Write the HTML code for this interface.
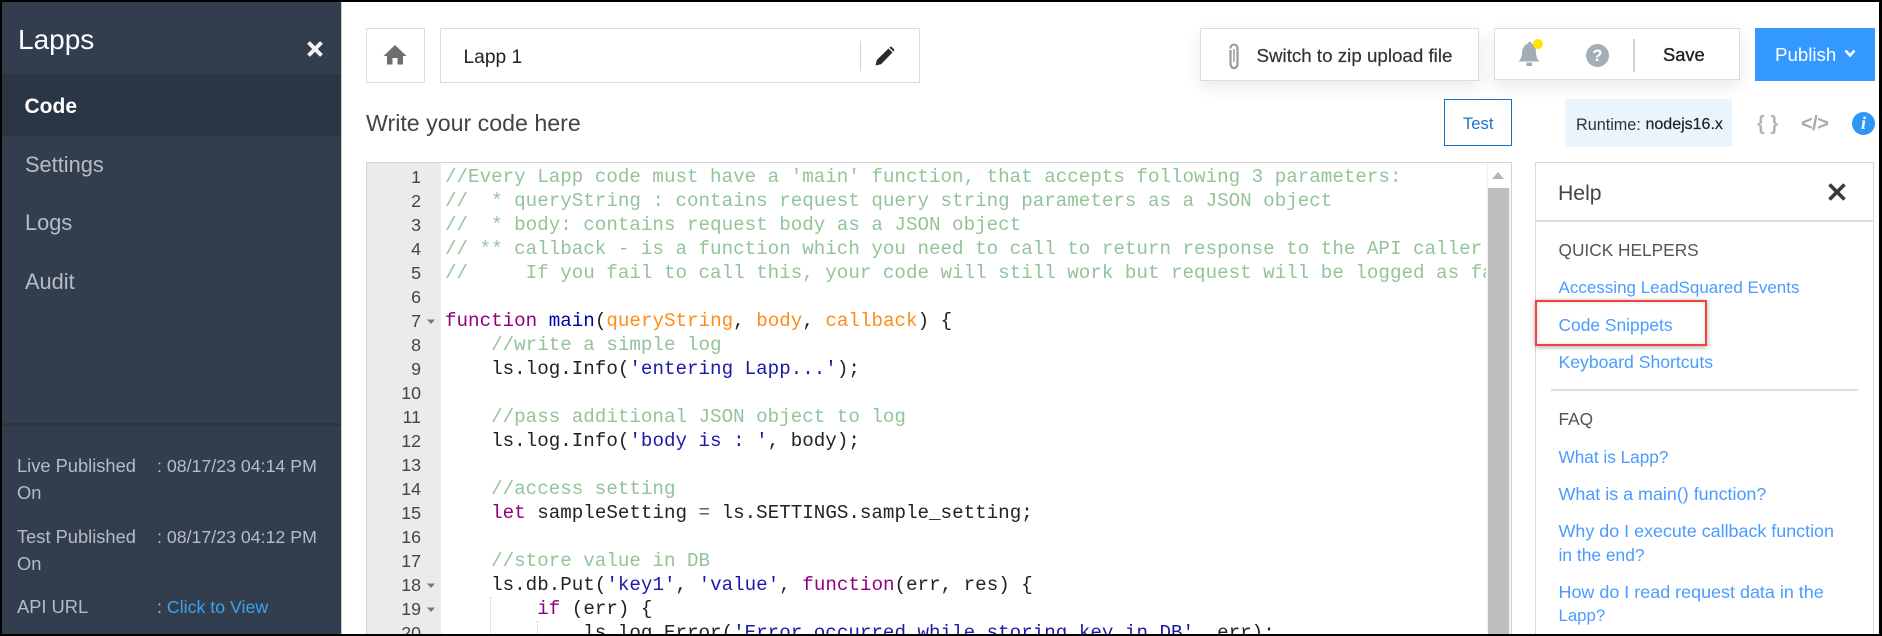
<!DOCTYPE html>
<html><head><meta charset="utf-8">
<style>
*{box-sizing:border-box}
html,body{margin:0;padding:0;background:#000}
body{width:1882px;height:636px;overflow:hidden;position:relative;font-family:"Liberation Sans",sans-serif}
#page{position:absolute;left:2px;top:2px;width:1877px;height:631.5px;background:#fff;overflow:hidden}
.a{position:absolute}
#wrap{position:absolute;left:-2px;top:-2px;width:1882px;height:636px}
.t{position:absolute;white-space:nowrap;line-height:30px;height:30px}
.box{position:absolute;background:#fff;border:1.5px solid #dcdcdc}
.nav{color:#b6bcc4;font-size:21.8px;left:25px}
.ft{color:#b6bcc4;font-size:18.3px;left:17px}
.fv{color:#b6bcc4;font-size:17.75px;left:157px}
.lk{color:#4a9bff;font-size:17px;left:1558.5px}
.hd{color:#555;font-size:17.3px;left:1558.5px}
#code{position:absolute;left:445px;top:165px;width:1041px;height:480px;overflow:hidden;font-family:"Liberation Mono",monospace;font-size:19.22px;line-height:24px;color:#222;white-space:pre}
#code div{height:24px}
.c{color:#93c499}.k{color:#93007f}.f{color:#0000a2}.p{color:#ff8c1a}.s{color:#1a1aa6}.o{color:#555}
#nums{position:absolute;left:366px;top:165px;width:55px;text-align:right;font-size:17.8px;line-height:24px;color:#444}
#nums div{height:24px}
</style></head>
<body>
<div id="page"><div id="wrap">

<div class="a" style="left:0;top:0;width:342px;height:636px;background:#323e4e;border-right:1px solid #c8ccd2"></div>
<div class="a" style="left:0;top:74px;width:341px;height:61.5px;background:#2b3644"></div>
<div class="a" style="left:0;top:423px;width:341px;height:3px;background:#2b3644"></div>
<div class="t" style="left:18px;top:25px;color:#fff;font-size:28px">Lapps</div>
<svg class="a" style="left:305px;top:39px" width="20" height="20"><path d="M3.5 3.5L16.5 16.5M16.5 3.5L3.5 16.5" stroke="#f2f2f2" stroke-width="4"/></svg>
<div class="t" style="left:24.5px;top:92px;color:#fff;font-size:21px;font-weight:bold">Code</div>
<div class="t nav" style="top:150px">Settings</div>
<div class="t nav" style="top:208px">Logs</div>
<div class="t nav" style="top:267px">Audit</div>
<div class="t ft" style="top:451px">Live Published</div>
<div class="t fv" style="top:451px">: 08/17/23 04:14 PM</div>
<div class="t ft" style="top:478px">On</div>
<div class="t ft" style="top:522px">Test Published</div>
<div class="t fv" style="top:522px">: 08/17/23 04:12 PM</div>
<div class="t ft" style="top:549px">On</div>
<div class="t ft" style="top:592px">API URL</div>
<div class="t fv" style="top:592px">: <span style="color:#3ea3ee">Click to View</span></div>

<div class="box" style="left:366px;top:28px;width:59px;height:55px"></div>
<svg class="a" style="left:383px;top:44px" width="24" height="21" viewBox="0 0 24 21"><path d="M12 1L0.5 12H4V20.5H9.5V14H14.5V20.5H20V12H23.5Z" fill="#6e6e6e"/></svg>
<div class="box" style="left:440px;top:28px;width:480px;height:55px"></div>
<div class="t" style="left:463.5px;top:43px;font-size:19.2px;color:#222">Lapp 1</div>
<div class="a" style="left:860px;top:41px;width:1px;height:30px;background:#d4d4d4"></div>
<svg class="a" style="left:875px;top:46px" width="20" height="20" viewBox="0 0 20 20"><path d="M0.5 19.5L1.8 14L13.5 2.5L17.5 6.5L6 18.2ZM14.8 1.3C15.6 .5 16.3 .5 17 1.2L18.8 3C19.5 3.7 19.5 4.4 18.7 5.2L18.4 5.5L14.5 1.6Z" fill="#2b2b2b"/></svg>

<div class="t" style="left:366px;top:108px;font-size:23.2px;color:#444">Write your code here</div>

<div class="box" style="left:1200px;top:28px;width:279px;height:53px;box-shadow:0 6px 16px rgba(0,0,0,.09)"></div>
<svg class="a" style="left:1227px;top:43px" width="14" height="27" viewBox="0 0 14 27"><path d="M3.5 7V20.5C3.5 23.5 5 25 7 25C9.2 25 10.5 23.5 10.5 20.5V5.5C10.5 3 9 1.7 7 1.7C5 1.7 3.5 3 3.5 5.5" fill="none" stroke="#9a9a9a" stroke-width="2.2"/><path d="M7 6V19" stroke="#b5b5b5" stroke-width="2"/></svg>
<div class="t" style="left:1256.5px;top:41px;font-size:18.75px;color:#333;-webkit-text-stroke:.2px #333">Switch to zip upload file</div>

<div class="box" style="left:1494px;top:28px;width:246px;height:52px;box-shadow:0 6px 16px rgba(0,0,0,.09)"></div>
<svg class="a" style="left:1517px;top:41px" width="26" height="26" viewBox="0 0 26 26"><path d="M11 2.5a1.8 1.8 0 0 1 3.6 0C18.5 4 19 8 19 12C19 15.5 20.5 18.5 22.5 20.5H1.5C3.500 18.500 5 15.500 5 12C5 8 7 4 11 2.500Z" fill="#a3abb3"/><rect x="9.500" y="21.500" width="5.500" height="3.500" fill="#a3abb3"/></svg>
<div class="a" style="left:1533px;top:39px;width:10px;height:10px;border-radius:50%;background:#ffe600"></div>
<div class="a" style="left:1586px;top:44px;width:23px;height:23px;border-radius:50%;background:#a4aeb6;color:#fff;font-size:17px;font-weight:bold;line-height:23px;text-align:center">?</div>
<div class="a" style="left:1633px;top:39px;width:2px;height:33px;background:#d2d2d2"></div>
<div class="t" style="left:1663px;top:40px;font-size:18.3px;color:#222;-webkit-text-stroke:.35px #222">Save</div>

<div class="a" style="left:1755px;top:28px;width:120px;height:53px;background:#3399ff"></div>
<div class="t" style="left:1775px;top:40px;font-size:18.700px;color:#fff">Publish</div>
<svg class="a" style="left:1844px;top:49px" width="12" height="10"><path d="M1.500 1.500L6 6.500L10.500 1.500" fill="none" stroke="#fff" stroke-width="2.500"/></svg>

<div class="a" style="left:1444px;top:99px;width:68px;height:47px;border:1.500px solid #1a6fc4;background:#fff"></div>
<div class="t" style="left:1463px;top:109px;font-size:16.600px;color:#1a72cc">Test</div>
<div class="a" style="left:1565px;top:99px;width:167px;height:48px;background:#e9f4fd"></div>
<div class="t" style="left:1576px;top:110px;font-size:16.200px;color:#333">Runtime:</div>
<div class="t" style="left:1645.500px;top:110px;font-size:16px;color:#222;-webkit-text-stroke:.2px #222">nodejs16.x</div>
<div class="t" style="left:1757px;top:109px;font-size:20px;color:#b4b4b4;font-weight:bold">{&nbsp;}</div>
<div class="t" style="left:1801px;top:109px;font-size:20px;color:#aaa;font-weight:bold;letter-spacing:-.5px">&lt;/&gt;</div>
<div class="a" style="left:1852px;top:112px;width:23px;height:23px;border-radius:50%;background:#2f96f5;color:#fff;font:italic bold 18px/23px 'Liberation Serif',serif;text-align:center">i</div>

<div class="a" style="left:366px;top:162px;width:1146px;height:480px;border:1.500px solid #d4d4d4;background:#fff"></div>
<div class="a" style="left:367px;top:163px;width:74px;height:480px;background:#ebebeb"></div>
<div id="nums">
<div>1</div><div>2</div><div>3</div><div>4</div><div>5</div><div>6</div><div>7</div><div>8</div><div>9</div><div>10</div><div>11</div><div>12</div><div>13</div><div>14</div><div>15</div><div>16</div><div>17</div><div>18</div><div>19</div><div>20</div>
</div>
<svg class="a" style="left:426px;top:318px" width="10" height="8"><path d="M1 1.500H9L5 6Z" fill="#777"/></svg>
<svg class="a" style="left:426px;top:582px" width="10" height="8"><path d="M1 1.500H9L5 6Z" fill="#777"/></svg>
<svg class="a" style="left:426px;top:606px" width="10" height="8"><path d="M1 1.500H9L5 6Z" fill="#777"/></svg>
<div class="a" style="left:490px;top:597px;width:0;height:40px;border-left:1px dotted #ccc"></div>
<div class="a" style="left:537px;top:621px;width:0;height:20px;border-left:1px dotted #ccc"></div>
<div id="code"><div class="c">//Every Lapp code must have a 'main' function, that accepts following 3 parameters:</div><div class="c">//  * queryString : contains request query string parameters as a JSON object</div><div class="c">//  * body: contains request body as a JSON object</div><div class="c">// ** callback - is a function which you need to call to return response to the API caller.</div><div class="c">//     If you fail to call this, your code will still work but request will be logged as failed</div><div> </div><div><span class="k">function</span> <span class="f">main</span>(<span class="p">queryString</span>, <span class="p">body</span>, <span class="p">callback</span>) {</div><div class="c">    //write a simple log</div><div>    ls.log.Info(<span class="s">'entering Lapp...'</span>);</div><div> </div><div class="c">    //pass additional JSON object to log</div><div>    ls.log.Info(<span class="s">'body is : '</span>, body);</div><div> </div><div class="c">    //access setting</div><div>    <span class="k">let</span> sampleSetting <span class="o">=</span> ls.SETTINGS.sample_setting;</div><div> </div><div class="c">    //store value in DB</div><div>    ls.db.Put(<span class="s">'key1'</span>, <span class="s">'value'</span>, <span class="k">function</span>(err, res) {</div><div>        <span class="k">if</span> (err) {</div><div>            ls.log.Error(<span class="s">'Error occurred while storing key in DB'</span>, err);</div></div>

<div class="a" style="left:1487px;top:163px;width:24px;height:480px;background:#f1f1f1"></div>
<div class="a" style="left:1488px;top:163px;width:23px;height:25px;background:#fff"></div>
<svg class="a" style="left:1491px;top:171px" width="14" height="10"><path d="M7 1L13 8H1Z" fill="#b4b4b4"/></svg>
<div class="a" style="left:1488px;top:188px;width:21px;height:460px;background:#bebebe"></div>

<div class="box" style="left:1535px;top:162px;width:339px;height:480px;border-color:#d8d8d8"></div>
<div class="a" style="left:1536px;top:220px;width:337px;height:1.500px;background:#dedede"></div>
<div class="t" style="left:1558px;top:179px;font-size:21.200px;color:#444">Help</div>
<svg class="a" style="left:1827px;top:182px" width="20" height="20"><path d="M2.500 2.500L17.500 17.500M17.500 2.500L2.500 17.500" stroke="#3a3a3a" stroke-width="3.600"/></svg>
<div class="t hd" style="top:235px">QUICK HELPERS</div>
<div class="t lk" style="top:273px">Accessing LeadSquared Events</div>
<div class="t lk" style="top:310px;font-size:17.4px">Code Snippets</div>
<div class="t lk" style="top:347px;font-size:17.6px">Keyboard Shortcuts</div>
<div class="a" style="left:1535px;top:300px;width:172px;height:46px;border:2px solid #f24141;box-shadow:0 1px 5px rgba(0,0,0,.35),inset 0 0 4px rgba(0,0,0,.15)"></div>
<div class="a" style="left:1551px;top:389px;width:307px;height:1.500px;background:#dedede"></div>
<div class="t hd" style="top:404px">FAQ</div>
<div class="t lk" style="top:442px;font-size:17.2px">What is Lapp?</div>
<div class="t lk" style="top:479px;font-size:17.9px">What is a main() function?</div>
<div class="t lk" style="top:516px;font-size:17.9px">Why do I execute callback function</div>
<div class="t lk" style="top:540px;font-size:17.4px">in the end?</div>
<div class="t lk" style="top:577px;font-size:17.95px">How do I read request data in the</div>
<div class="t lk" style="top:601px;font-size:16.8px">Lapp?</div>

</div></div>
</body></html>
